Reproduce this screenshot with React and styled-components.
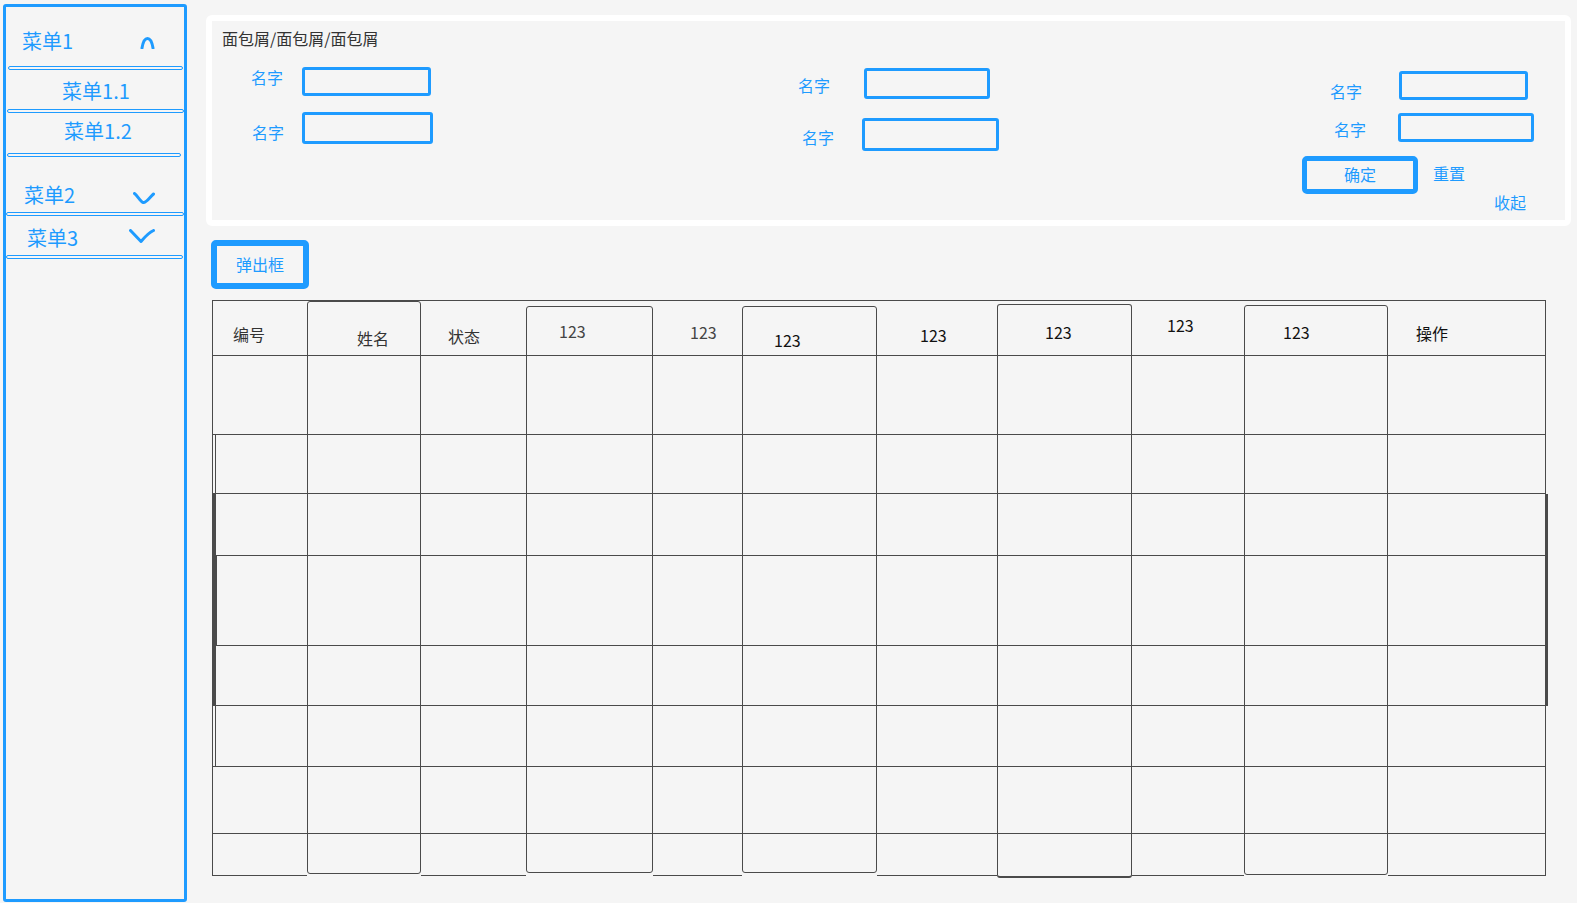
import styled, { createGlobalStyle } from "styled-components";

const BLUE = "#1e9bff";
const LINE = "#4a4a4a";

const GlobalStyle = createGlobalStyle`
  html, body {
    margin: 0;
    padding: 0;
    background: #f5f5f5;
  }
  body {
    font-family: "Noto Sans CJK SC", "Noto Sans", sans-serif;
  }
  * {
    box-sizing: border-box;
  }
`;

const Page = styled.div`
  display: flex;
  align-items: flex-start;
  width: 1577px;
  height: 903px;
  overflow: hidden;
  padding: 4px 0 0 3px;
`;

/* ---------- sidebar ---------- */

const Sidebar = styled.nav`
  flex-shrink: 0;
  display: flex;
  flex-direction: column;
  width: 184px;
  height: 898px;
  border: 3px solid ${BLUE};
  border-radius: 3px;
`;

const MenuRow = styled.div`
  display: flex;
  align-items: flex-start;
  justify-content: space-between;
  height: ${(p) => p.$h}px;
  padding-left: ${(p) => p.$pl}px;
  padding-right: 29px;
`;

const MenuLabel = styled.span`
  margin-top: ${(p) => p.$mt}px;
  font-size: 20px;
  line-height: 26px;
  color: ${BLUE};
`;

const ChevronWrap = styled.span`
  display: flex;
  margin-top: ${(p) => p.$mt}px;
`;

const SubItem = styled.div`
  display: flex;
  justify-content: center;
  height: ${(p) => p.$h}px;
  padding-top: ${(p) => p.$pt}px;
  padding-left: ${(p) => p.$pl}px;
  font-size: 20px;
  line-height: 26px;
  color: ${BLUE};
`;

const Divider = styled.div`
  height: 4px;
  margin: 0 ${(p) => p.$mr}px 0 ${(p) => p.$ml}px;
  border: 1px solid ${BLUE};
  border-radius: 3px;
`;

const chevrons = {
  up: { w: 15, h: 12, d: "M2 11 C3 5 5 1.5 7.5 1.5 C10 1.5 12 5 13 11" },
  down: { w: 22, h: 12, d: "M1.5 1.5 C4 3 7 9 10 10.5 C13 11.5 17 5 20.5 2" },
  vee: { w: 26, h: 14, d: "M1.5 1.5 L12 12.5 C15 9 19 4 24.5 1.5" },
};

const Chevron = ({ kind, mt }) => {
  const c = chevrons[kind];
  return (
    <ChevronWrap $mt={mt}>
      <svg width={c.w} height={c.h} viewBox={`0 0 ${c.w} ${c.h}`} fill="none">
        <path d={c.d} stroke={BLUE} strokeWidth="3" strokeLinecap="round" strokeLinejoin="round" />
      </svg>
    </ChevronWrap>
  );
};

/* ---------- main ---------- */

const Main = styled.main`
  display: flex;
  flex-direction: column;
  align-items: flex-start;
  margin-left: 19px;
  padding-top: 11px;
`;

const SearchCard = styled.section`
  width: 1365px;
  height: 211px;
  border: 6px solid #fff;
  border-radius: 6px;
  padding: 6px 0 0 10px;
`;

const Breadcrumb = styled.div`
  font-size: 16px;
  line-height: 22px;
  margin-bottom: 1px;
  color: #333;
`;

const Form = styled.div`
  display: flex;
`;

const FormCol = styled.div`
  display: flex;
  flex-direction: column;
  align-items: flex-start;
  width: ${(p) => (p.$w ? `${p.$w}px` : "auto")};
  margin-left: ${(p) => p.$ml || 0}px;
`;

const Field = styled.label`
  display: flex;
  align-items: flex-start;
  height: ${(p) => p.$h}px;
  margin-top: ${(p) => p.$mt}px;
  margin-left: ${(p) => p.$ml || 0}px;
`;

const FieldLabel = styled.span`
  margin-top: ${(p) => p.$mt - 1}px;
  font-size: 16px;
  line-height: 22px;
  color: ${BLUE};
`;

const TextBox = styled.input`
  flex-shrink: 0;
  width: ${(p) => p.$w}px;
  height: ${(p) => p.$h}px;
  margin: 0 0 0 ${(p) => p.$gap}px;
  padding: 0;
  background: transparent;
  border: 3px solid ${BLUE};
  border-radius: 3px;
  outline: none;
`;

const Actions = styled.div`
  display: flex;
  align-items: flex-start;
  margin: 14px 0 0 -28px;
`;

const OutlineButton = styled.button`
  display: flex;
  align-items: center;
  justify-content: center;
  width: ${(p) => p.$w}px;
  height: ${(p) => p.$h}px;
  padding: 0 0 2px;
  background: transparent;
  border: ${(p) => p.$bw}px solid ${BLUE};
  border-radius: 5px;
  font-family: inherit;
  font-size: 16px;
  line-height: 22px;
  color: ${BLUE};
`;

const LinkGroup = styled.div`
  display: flex;
  flex-direction: column;
  align-items: flex-start;
  margin-left: 15px;
`;

const TextLink = styled.span`
  margin: ${(p) => p.$mt}px 0 0 ${(p) => p.$ml || 0}px;
  font-size: 16px;
  line-height: 22px;
  color: ${BLUE};
`;

const PopupButton = styled(OutlineButton)`
  margin: 14px 0 0 5px;
`;

/* ---------- table ---------- */

const Table = styled.div`
  display: flex;
  align-items: flex-start;
  margin: 11px 0 0 6px;
  border-top: 1px solid ${LINE};
`;

const Column = styled.div`
  display: flex;
  flex-direction: column;
  width: ${(p) => p.$w}px;
  margin-top: ${(p) => p.$mt}px;
  border-bottom: ${(p) => p.$bb}px solid ${LINE};
  ${(p) =>
    p.$boxed &&
    `
    border-top: 1px solid ${LINE};
    border-left: 1px solid ${LINE};
    border-right: 1px solid ${LINE};
    border-radius: 3px;
  `}
`;

// rows drawn a little apart at the left edge of the sketch
const leadShadow = (p) => {
  if (!p.$lead || !p.$inset) return "";
  return p.$thick
    ? `box-shadow: inset 1px 0 0 ${LINE};`
    : `box-shadow: inset 2px 0 0 #f5f5f5, inset 3px 0 0 ${LINE};`;
};

const Cell = styled.div`
  height: ${(p) => p.$h}px;
  border-bottom: ${(p) => (p.$last ? 0 : 1)}px solid ${LINE};
  ${(p) => p.$lead && `border-left: ${p.$thick ? 4 : 1}px solid ${LINE};`}
  ${(p) =>
    p.$tail &&
    `border-right: ${p.$thick ? 3 : 1}px solid ${LINE}; margin-right: ${p.$thick ? -2 : 0}px;`}
  ${leadShadow}
`;

const HeadCell = styled(Cell)`
  padding: ${(p) => p.$pt}px 0 0 ${(p) => p.$pl}px;
  font-size: 16px;
  line-height: 20px;
  color: ${(p) => p.$color};
  white-space: nowrap;
`;

const columns = [
  { w: 95, label: "编号", pl: 20, pt: 23, color: "#333" },
  { w: 114, label: "姓名", pl: 49, pt: 26, color: "#333", top: 301, bottom: 873 },
  { w: 105, label: "状态", pl: 27, pt: 25, color: "#333" },
  { w: 127, label: "123", pl: 32, pt: 14, color: "#444", top: 306, bottom: 872 },
  { w: 89, label: "123", pl: 37, pt: 21, color: "#444" },
  { w: 135, label: "123", pl: 31, pt: 23, color: "#111", top: 306, bottom: 872 },
  { w: 120, label: "123", pl: 43, pt: 24, color: "#111" },
  { w: 135, label: "123", pl: 47, pt: 17, color: "#111", top: 304, bottom: 876, bb: 2 },
  { w: 112, label: "123", pl: 35, pt: 14, color: "#111" },
  { w: 144, label: "123", pl: 38, pt: 16, color: "#111", top: 305, bottom: 874 },
  { w: 158, label: "操作", pl: 28, pt: 22, color: "#111" },
];

const rows = [
  { h: 79 },
  { h: 59, inset: true },
  { h: 62, thick: true },
  { h: 90, thick: true, inset: true },
  { h: 60, thick: true },
  { h: 61, inset: true },
  { h: 67 },
];

const DataTable = () => (
  <Table>
    {columns.map((col, ci) => {
      const boxed = Boolean(col.top);
      const top = boxed ? col.top : 300;
      const bottom = boxed ? col.bottom : 875;
      const lead = ci === 0;
      const tail = ci === columns.length - 1;
      return (
        <Column
          key={ci}
          $w={col.w}
          $boxed={boxed}
          $mt={boxed ? top - 301 : 0}
          $bb={col.bb || 1}
        >
          <HeadCell
            $h={355 - top}
            $pl={col.pl}
            $pt={col.pt}
            $color={col.color}
            $lead={lead}
            $tail={tail}
          >
            {col.label}
          </HeadCell>
          {rows.map((r, ri) => (
            <Cell
              key={ri}
              $h={r.h}
              $lead={lead}
              $tail={tail}
              $thick={r.thick}
              $inset={r.inset}
            />
          ))}
          <Cell $h={bottom - 834} $last $lead={lead} $tail={tail} />
        </Column>
      );
    })}
  </Table>
);

export default function App() {
  return (
    <>
      <GlobalStyle />
      <Page>
        <Sidebar>
          <MenuRow $h={59} $pl={16}>
            <MenuLabel $mt={21}>菜单1</MenuLabel>
            <Chevron kind="up" mt={30} />
          </MenuRow>
          <Divider $ml={2} $mr={1} />
          <SubItem $h={39} $pt={8} $pl={2}>菜单1.1</SubItem>
          <Divider $ml={1} $mr={0} />
          <SubItem $h={40} $pt={5} $pl={6}>菜单1.2</SubItem>
          <Divider $ml={1} $mr={3} />
          <MenuRow $h={55} $pl={18}>
            <MenuLabel $mt={25}>菜单2</MenuLabel>
            <Chevron kind="down" mt={35} />
          </MenuRow>
          <Divider $ml={0} $mr={0} />
          <MenuRow $h={39} $pl={21}>
            <MenuLabel $mt={9}>菜单3</MenuLabel>
            <Chevron kind="vee" mt={13} />
          </MenuRow>
          <Divider $ml={0} $mr={1} />
        </Sidebar>

        <Main>
          <SearchCard>
            <Breadcrumb>面包屑/面包屑/面包屑</Breadcrumb>
            <Form>
              <FormCol $w={547} $ml={29}>
                <Field $mt={17} $h={29}>
                  <FieldLabel $mt={0}>名字</FieldLabel>
                  <TextBox $w={129} $h={29} $gap={19} />
                </Field>
                <Field $mt={16} $ml={1} $h={32}>
                  <FieldLabel $mt={10}>名字</FieldLabel>
                  <TextBox $w={131} $h={32} $gap={18} />
                </Field>
              </FormCol>
              <FormCol $w={532}>
                <Field $mt={18} $h={31}>
                  <FieldLabel $mt={7}>名字</FieldLabel>
                  <TextBox $w={126} $h={31} $gap={34} />
                </Field>
                <Field $mt={19} $ml={4} $h={33}>
                  <FieldLabel $mt={9}>名字</FieldLabel>
                  <TextBox $w={137} $h={33} $gap={28} />
                </Field>
              </FormCol>
              <FormCol>
                <Field $mt={21} $h={29}>
                  <FieldLabel $mt={10}>名字</FieldLabel>
                  <TextBox $w={129} $h={29} $gap={37} />
                </Field>
                <Field $mt={13} $ml={4} $h={29}>
                  <FieldLabel $mt={6}>名字</FieldLabel>
                  <TextBox $w={136} $h={29} $gap={32} />
                </Field>
                <Actions>
                  <OutlineButton $w={116} $h={38} $bw={5}>确定</OutlineButton>
                  <LinkGroup>
                    <TextLink $mt={6}>重置</TextLink>
                    <TextLink $mt={7} $ml={61}>收起</TextLink>
                  </LinkGroup>
                </Actions>
              </FormCol>
            </Form>
          </SearchCard>

          <PopupButton $w={98} $h={49} $bw={6}>弹出框</PopupButton>

          <DataTable />
        </Main>
      </Page>
    </>
  );
}
